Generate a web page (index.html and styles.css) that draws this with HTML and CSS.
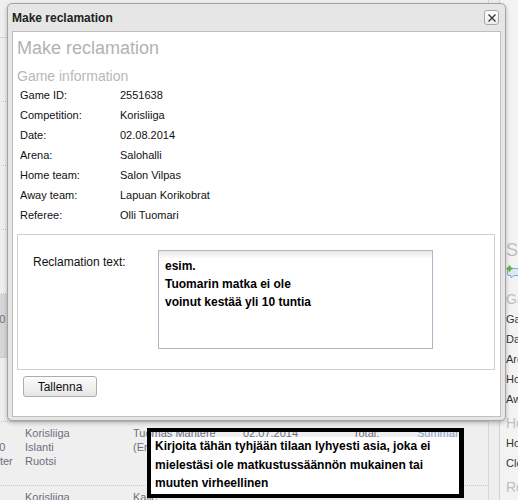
FILE: index.html
```html
<!DOCTYPE html>
<html lang="en">
<head>
    <meta charset="UTF-8">
    <title>Make reclamation</title>
    <link rel="stylesheet" href="styles.css">
</head>
<body>
    <div class="page">
        <div class="main">
            <div class="toolbar"></div>
            <div class="row"></div>
            <div class="row"></div>
            <div class="row"></div>
            <div class="row"></div>
            <div class="row selected">
                <div class="cell"><span>&nbsp;</span><span>2010</span></div>
            </div>
            <div class="row"></div>
            <div class="row">
                <div class="cell"><span>&nbsp;</span><span>2010</span><span>Winter</span></div>
                <div class="cell"><span>Korisliiga</span><span>Islanti</span><span>Ruotsi</span></div>
                <div class="cell"><span>Tuomas Mantere</span><span>(Eroon)</span></div>
                <div class="cell"><span>02.07.2014</span></div>
                <div class="cell"><span>Total:</span></div>
                <div class="cell link"><span>Summary</span></div>
            </div>
            <div class="row">
                <div class="cell"><span>&nbsp;</span></div>
                <div class="cell"><span>Korisliiga</span></div>
                <div class="cell"><span>Kalle</span></div>
            </div>
        </div>

        <div class="side">
            <div class="side-title">Summary</div>
            <div class="side-icon">
                <svg width="18" height="13" viewBox="0 0 18 13">
                    <path d="M3 3.5 h13 a1.5 1.5 0 0 1 1.5 1.5 v4 a1.5 1.5 0 0 1 -1.5 1.5 h-8 l-3 2.5 v-2.5 h-2 a1.5 1.5 0 0 1 -1.5 -1.5 v-4 a1.5 1.5 0 0 1 1.5 -1.5z" fill="#dce8f4" stroke="#8fa8c4"/>
                    <path d="M3.5 0.5 v6 M0.5 3.5 h6" stroke="#5cab3a" stroke-width="2"/>
                </svg>
            </div>
            <div class="side-sub">Game information</div>
            <div class="side-item">Game ID</div>
            <div class="side-item">Date</div>
            <div class="side-item">Arena</div>
            <div class="side-item">Home team</div>
            <div class="side-item">Away team</div>
            <div class="side-sub">Hotel</div>
            <div class="side-item">Hotel name</div>
            <div class="side-item">Closed</div>
            <div class="side-sub">Reclamations</div>
        </div>
    </div>

    <div class="dialog">
        <div class="dialog-title">
            <span>Make reclamation</span>
            <button class="close" title="Close">
                <svg width="12" height="12" viewBox="0 0 12 12">
                    <path d="M2.5 2.5 L9.5 9.5 M9.5 2.5 L2.5 9.5" stroke="#333" stroke-width="1.3"/>
                </svg>
            </button>
        </div>
        <div class="dialog-body">
            <h2>Make reclamation</h2>
            <h3>Game information</h3>
            <table class="info">
                <tr><td>Game ID:</td><td>2551638</td></tr>
                <tr><td>Competition:</td><td>Korisliiga</td></tr>
                <tr><td>Date:</td><td>02.08.2014</td></tr>
                <tr><td>Arena:</td><td>Salohalli</td></tr>
                <tr><td>Home team:</td><td>Salon Vilpas</td></tr>
                <tr><td>Away team:</td><td>Lapuan Korikobrat</td></tr>
                <tr><td>Referee:</td><td>Olli Tuomari</td></tr>
            </table>
            <div class="fieldset">
                <label class="field-label">Reclamation text:</label>
                <div class="textarea">esim.<br>Tuomarin matka ei ole<br>voinut kestää yli 10 tuntia</div>
            </div>
            <button class="save">Tallenna</button>
        </div>
    </div>

    <div class="callout">
        <div class="callout-text">Kirjoita tähän tyhjään tilaan lyhyesti asia, joka ei mielestäsi ole matkustussäännön mukainen tai muuten virheellinen</div>
    </div>
</body>
</html>
```

FILE: styles.css
```css
body {
    margin: 0;
    font-family: 'Liberation Sans', Arial, sans-serif;
    font-size: 11px;
    background-color: #eeeeee;
    overflow: hidden;
}

/* background page */

.page {
    display: flex;
    height: 500px;
    overflow: hidden;
}

.main {
    flex: 0 0 507px;
    margin-left: -19px;
    border-right: 1px solid #d6d6d6;
    background-color: #efefef;
    overflow: hidden;
}

.toolbar {
    height: 37px;
    border-bottom: 1px solid #d4d4d4;
}

.row {
    display: grid;
    grid-template-columns: 44px 108px 110px 110px 64px 1fr;
    padding: 4px 0 3px;
    height: 56px;
    border-bottom: 1px dotted #c8c8c8;
    color: #6e6e82;
}

.row.selected {
    background-color: #d6d6d6;
}

.cell {
    display: flex;
    flex-direction: column;
    line-height: 14px;
    white-space: nowrap;
    overflow: hidden;
}

.cell.link {
    color: #8aa6c6;
}

.side {
    flex: 1;
    margin-left: 10px;
    border-left: 1px solid #d2d2d2;
    padding: 239px 0 0 6px;
    background-color: #f3f3f3;
    white-space: nowrap;
    overflow: hidden;
}

.side-title {
    font-size: 18px;
    line-height: 22px;
    color: #bdbdbd;
}

.side-icon {
    height: 20px;
    padding-top: 4px;
}

.side-sub {
    font-size: 14px;
    line-height: 20px;
    color: #c0c0c0;
    margin-top: 4px;
}

.side-item {
    line-height: 20px;
    color: #333;
}

/* dialog */

.dialog {
    position: absolute;
    left: 7px;
    top: 3px;
    width: 489px;
    height: 413px;
    padding: 0 4px 3px;
    background-color: #e6e6e6;
    border: 1px solid #a4a4a4;
    border-radius: 5px;
    box-shadow: 0 2px 4px rgba(0,0,0,0.25);
}

.dialog-title {
    height: 27px;
    display: flex;
    justify-content: space-between;
    align-items: center;
    font-weight: bold;
    font-size: 12px;
    color: #222;
}

.close {
    width: 15px;
    height: 15px;
    padding: 0;
    margin-right: 2px;
    display: flex;
    align-items: center;
    justify-content: center;
    border: 1px solid #a8a8a8;
    border-radius: 3px;
    background: linear-gradient(#ffffff, #ececec);
}

.dialog-body {
    box-sizing: border-box;
    height: 386px;
    background-color: #fff;
    border: 1px solid #c6bcbc;
    padding: 5px 5px 0 4px;
}

.dialog-body h2 {
    margin: 0;
    font-size: 18px;
    line-height: 22px;
    font-weight: normal;
    color: #b2b2b2;
}

.dialog-body h3 {
    margin: 8px 0 0;
    font-size: 14px;
    line-height: 18px;
    font-weight: normal;
    color: #b8b8b8;
}

.info {
    border-collapse: collapse;
    color: #111;
}

.info td {
    height: 20px;
    padding: 0 0 0 3px;
}

.info td:first-child {
    width: 97px;
}

.fieldset {
    margin-top: 9px;
    display: flex;
    border: 1px solid #cfcfd6;
    padding: 15px 0 20px 15px;
}

.field-label {
    width: 125px;
    margin-top: 4px;
    font-size: 12px;
    line-height: 16px;
    color: #111;
}

.textarea {
    width: 267px;
    height: 91px;
    padding: 6px 0 0 6px;
    border: 1px solid #b4b4c8;
    background: linear-gradient(#e6e6e6, #ffffff 8px);
    font-weight: bold;
    font-size: 12px;
    line-height: 18px;
    color: #000;
}

.save {
    margin: 6px 0 0 6px;
    width: 74px;
    height: 21px;
    padding: 0;
    border: 1px solid #acacac;
    border-radius: 3px;
    background: linear-gradient(#fbfbfb, #e6e6e6);
    font-family: 'Liberation Sans', Arial, sans-serif;
    font-size: 12px;
    color: #111;
}

/* help note */

.callout {
    position: absolute;
    left: 147px;
    top: 428px;
    width: 308px;
    height: 62px;
    border: 4px solid #000;
    border-right-width: 5px;
}

.callout-text {
    margin-top: 5px;
    height: 57px;
    padding-left: 4px;
    background-color: #fff;
    font-weight: bold;
    font-size: 12px;
    line-height: 18.5px;
    color: #000;
}
```
